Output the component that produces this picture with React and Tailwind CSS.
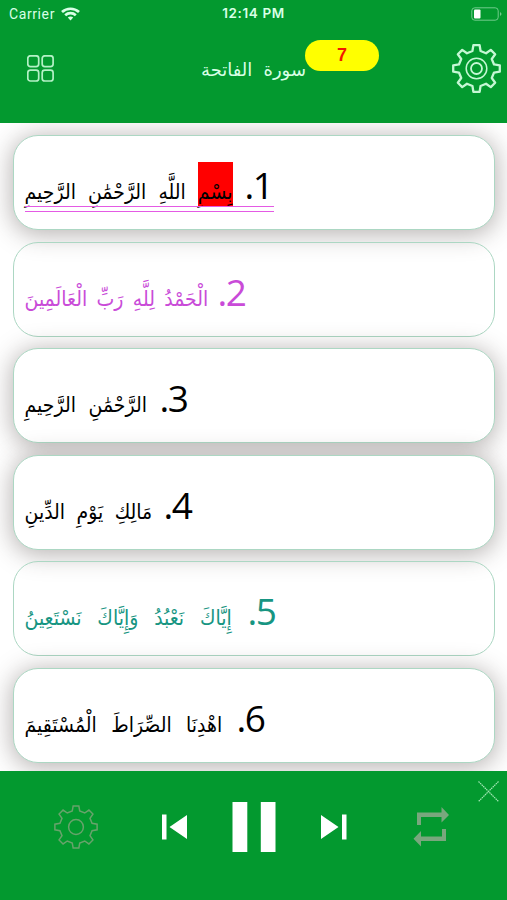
import React from 'react';

const verses = [
  { n: 1, words: ['بِسْمِ', 'اللَّهِ', 'الرَّحْمَٰنِ', 'الرَّحِيمِ'], tone: 'text-black bg-white', width: 'w-[248px]', current: true },
  { n: 2, words: ['الْحَمْدُ', 'لِلَّهِ', 'رَبِّ', 'الْعَالَمِينَ'], tone: 'text-[#c94bd8]', width: 'w-[221px]', clear: true },
  { n: 3, words: ['الرَّحْمَٰنِ', 'الرَّحِيمِ'], tone: 'text-black bg-white', width: 'w-[163px]' },
  { n: 4, words: ['مَالِكِ', 'يَوْمِ', 'الدِّينِ'], tone: 'text-black bg-white', width: 'w-[167px]' },
  { n: 5, words: ['إِيَّاكَ', 'نَعْبُدُ', 'وَإِيَّاكَ', 'نَسْتَعِينُ'], tone: 'text-[#179582]', width: 'w-[251px]', clear: true },
  { n: 6, words: ['اهْدِنَا', 'الصِّرَاطَ', 'الْمُسْتَقِيمَ'], tone: 'text-black bg-white', width: 'w-[240px]' },
];

function gearPath(teeth, outer, inner, c) {
  const points = [];
  const step = (Math.PI * 2) / teeth;
  for (let i = 0; i < teeth; i++) {
    const a = i * step - Math.PI / 2;
    [[-0.29, inner], [-0.17, outer], [0.17, outer], [0.29, inner]].forEach(([k, r]) => {
      points.push(`${(c + Math.cos(a + k * step) * r).toFixed(2)} ${(c + Math.sin(a + k * step) * r).toFixed(2)}`);
    });
  }
  return `M${points.join('L')}Z`;
}

function Verse({ verse }) {
  return (
    <div className={`h-[95px] shrink-0 rounded-[25px] border border-[#acd7c3] pl-[11px] pt-[24px] ${verse.tone} ${verse.clear ? '' : 'shadow-[0_3px_24px_2px_rgba(60,50,48,0.36)]'}`}>
      <div dir="rtl" className={`relative flex h-[50px] items-baseline justify-between font-['DejaVu_Sans_Condensed','DejaVu_Sans',sans-serif] text-[21px] leading-[50px] whitespace-nowrap ${verse.width}`}>
        <span className="font-['Open_Sans',sans-serif] text-[37px] leading-[50px] tracking-[-1.5px]">{verse.n}.</span>
        {verse.words.map((word, i) => (
          <span key={i} className={verse.current && i === 0 ? 'bg-[linear-gradient(#ff0000,#ff0000)] bg-[length:100%_45px] bg-[position:0_1px] bg-no-repeat -my-[6px] py-[6px]' : ''}>{word}</span>
        ))}
        {verse.current && <i className="absolute left-0 top-[46px] h-[6px] w-[249px] border-y border-[#e45ae4]" />}
      </div>
    </div>
  );
}

export default function App() {
  return (
    <div className="flex h-[900px] w-[507px] flex-col overflow-hidden bg-white font-['Inter',sans-serif]">
      <header className="relative z-10 h-[123px] shrink-0 bg-[#03992f] text-[#d9ffe6]">
        <div className="grid h-[27px] grid-cols-3 items-center px-[9px] text-[13px]">
          <div className="flex items-center gap-[6px]">
            <span className="pt-[1px] font-['Roboto',sans-serif] text-[14px] tracking-[0.6px]">Carrier</span>
            <svg width="19" height="14" viewBox="0 0 19 14" fill="none" stroke="currentColor" strokeWidth="2.7"><path d="M1 5.1C5.8.6 13.2.6 18 5.1M4.2 8.3c3-2.8 7.6-2.8 10.6 0" /><path d="M6.8 10.5c1.5-1.4 3.9-1.4 5.4 0l-2.7 3Z" fill="currentColor" stroke="none" /></svg>
          </div>
          <div className="-mx-[10px] text-center text-[13.5px] font-semibold tracking-[0.6px]">12:14 PM</div>
          <svg className="-mr-[4px] justify-self-end" width="31" height="14" viewBox="0 0 31 14"><rect x=".8" y=".8" width="26.4" height="12.4" rx="3" fill="none" stroke="#71cb8c" /><rect x="3" y="2.5" width="6.5" height="9" rx="1" fill="white" /><path d="M29 5v4q3-2 0-4" fill="#71cb8c" /></svg>
        </div>
        <div className="flex h-[82px] items-center justify-between pl-[27px] pr-[6px]">
          <svg width="27" height="27" viewBox="0 0 27 27" fill="none" stroke="#b4f1c6" strokeWidth="1.7"><rect x=".8" y=".8" width="10.9" height="10.9" rx="2.6" /><rect x="15.2" y=".8" width="10.9" height="10.9" rx="2.6" /><rect x=".8" y="15.1" width="10.9" height="10.9" rx="2.6" /><rect x="15.2" y="15.1" width="10.9" height="10.9" rx="2.6" /></svg>
          <div className="relative -mr-[1px]">
            <h1 dir="rtl" className="flex w-[105px] justify-between pt-[3px] font-['DejaVu_Sans',sans-serif] text-[18px] leading-[30px]"><span>سورة</span><span>الفاتحة</span></h1>
            <span className="absolute left-[104px] top-[-12px] flex h-[31px] w-[74px] items-center justify-center rounded-full bg-[#ffff00] font-['Liberation_Sans',sans-serif] text-[18px] font-bold text-[#f21800]">7</span>
          </div>
          <svg width="49" height="49" viewBox="0 0 49 49" fill="none" stroke="#c5f7d4" strokeWidth="2.3" strokeLinejoin="round"><path d={gearPath(8, 23.5, 18, 24.5)} /><circle cx="24.5" cy="24.5" r="10.3" strokeWidth="1.5" /><circle cx="24.5" cy="24.5" r="5.5" strokeWidth="1.8" /></svg>
        </div>
      </header>
      <main className="flex h-[648px] shrink-0 flex-col gap-[11.6px] px-[12.5px] pt-[12px]">
        {verses.map((verse) => <Verse key={verse.n} verse={verse} />)}
      </main>
      <footer className="relative z-10 flex grow items-start bg-[#03992f] pl-[54px] pt-[30px] text-white">
        <svg className="mt-[4px] shrink-0" width="44" height="44" viewBox="0 0 44 44" fill="none" stroke="#67a36b" strokeWidth="1.5"><path d={gearPath(8, 21.3, 16.5, 22)} /><circle cx="22" cy="22" r="7.4" /></svg>
        <svg className="ml-[64px] mt-[13px] shrink-0" width="26" height="26" viewBox="0 0 26 26" fill="currentColor"><path d="M0 .5h4.500v25H0zM25 1v24L7.500 13z" /></svg>
        <svg className="ml-[44px] shrink-0" width="44" height="52" viewBox="0 0 44 52" fill="currentColor"><path d="M.5 1h14.800v50H.5zM28.800 1h14.700v50H28.800z" /></svg>
        <svg className="ml-[45px] mt-[13px] shrink-0" width="26" height="26" viewBox="0 0 26 26" fill="currentColor"><path d="M21 .5h4.500v25H21zM0 1v24l17.500-12z" /></svg>
        <svg className="ml-[66px] mt-[6px] shrink-0" width="37" height="40" viewBox="0 0 37 40" fill="#79a77d"><path d="M4 5.500h24.500V0L36 8l-7.500 7.500V10H8v8H4zM33 34H8v5.500L.500 31.700 8 24v5.500h21V22h4z" /></svg>
        <svg className="absolute right-[7px] top-[9px]" width="23" height="23" viewBox="0 0 23 23" stroke="#a2e6b4" strokeWidth="1.2" strokeDasharray="1.6 .6"><path d="m1.500 1.500 20 20m0-20-20 20" /></svg>
      </footer>
    </div>
  );
}
